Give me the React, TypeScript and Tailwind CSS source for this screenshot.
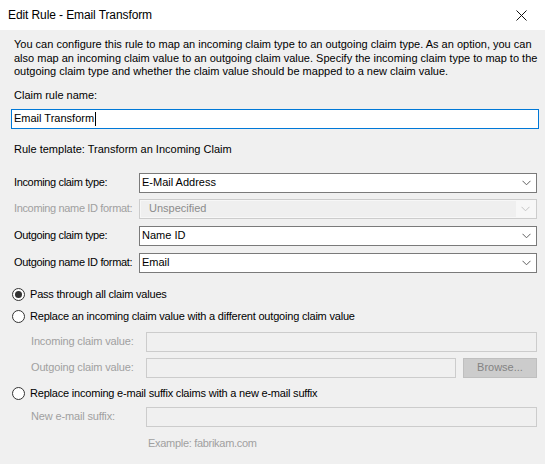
import React from "react";

const font = { fontFamily: '"Liberation Sans", Arial, sans-serif' };

function Chevron({ disabled }: { disabled?: boolean }) {
  return (
    <svg width="9" height="6" viewBox="0 0 9 6" className="shrink-0">
      <path
        d="M0.5 0.8 L4.5 4.8 L8.5 0.8"
        fill="none"
        stroke={disabled ? "#c4c4c4" : "#606060"}
        strokeWidth="1"
      />
    </svg>
  );
}

function Combo({
  label,
  value,
  disabled,
  className = "",
}: {
  label: string;
  value: string;
  disabled?: boolean;
  className?: string;
}) {
  return (
    <div className={`flex items-center pl-[14px] pr-[8px] ${className}`}>
      <span
        className={`w-[125px] shrink-0 whitespace-nowrap tracking-[-0.35px] ${disabled ? "text-[#a0a0a0]" : "text-black"}`}
      >
        {label}
      </span>
      {disabled ? (
        <div className="flex h-[20px] flex-1 items-center border border-[#cccccc] bg-[#f7f7f7] p-[1px]">
          <div className="flex h-full flex-1 items-center bg-[#efefef] pl-[8px] text-[#8c8c8c]">
            {value}
          </div>
          <div className="flex w-[19px] justify-center">
            <Chevron disabled />
          </div>
        </div>
      ) : (
        <div className="flex h-[20px] flex-1 items-center border border-[#7a7a7a] bg-white pl-[2px]">
          <span className="flex-1">{value}</span>
          <div className="flex w-[19px] justify-center">
            <Chevron />
          </div>
        </div>
      )}
    </div>
  );
}

function Radio({
  label,
  checked,
  className = "",
}: {
  label: string;
  checked?: boolean;
  className?: string;
}) {
  return (
    <div className={`flex h-[16px] items-center pl-[12px] ${className}`}>
      <span className="flex h-[13px] w-[13px] items-center justify-center rounded-full border border-[#333333] bg-white">
        {checked && <span className="h-[7px] w-[7px] rounded-full bg-[#333333]" />}
      </span>
      <span className="ml-[5px] tracking-[-0.2px]">{label}</span>
    </div>
  );
}

function DisabledField({
  label,
  className = "",
  browse,
}: {
  label: string;
  className?: string;
  browse?: boolean;
}) {
  return (
    <div className={`flex items-center pl-[31px] pr-[8px] ${className}`}>
      <span className="w-[115px] shrink-0 whitespace-nowrap tracking-[-0.15px] text-[#a0a0a0]">{label}</span>
      <div className="h-[20px] flex-1 border border-[#cccccc] bg-[#f0f0f0]" />
      {browse && (
        <div className="ml-[7px] flex h-[20px] w-[74px] items-center justify-center border border-[#bfbfbf] bg-[#cccccc] text-[#838383]">
          Browse...
        </div>
      )}
    </div>
  );
}

export default function App() {
  return (
    <div
      className="flex h-[464px] w-[545px] flex-col overflow-hidden bg-[#f0f0f0] text-[11px] leading-[13px] text-black"
      style={font}
    >
      <div className="flex h-[30px] shrink-0 items-center justify-between bg-white pl-[8px] pr-[18px]">
        <span className="text-[12px] tracking-[-0.1px]">Edit Rule - Email Transform</span>
        <svg width="11" height="11" viewBox="0 0 11 11">
          <path d="M0.5 0.5 L10.5 10.5 M10.5 0.5 L0.5 10.5" stroke="#111" strokeWidth="1" />
        </svg>
      </div>

      <p className="mt-[8px] pl-[14px] leading-[13.5px]">
        You can configure this rule to map an incoming claim type to an outgoing claim type. As an option, you can
        <br />
        also map an incoming claim value to an outgoing claim value. Specify the incoming claim type to map to the
        <br />
        outgoing claim type and whether the claim value should be mapped to a new claim value.
      </p>

      <div className="mt-[10px] pl-[14px]">Claim rule name:</div>
      <div className="ml-[11px] mr-[6px] mt-[7px] flex h-[20px] items-center border border-[#0078d7] bg-white pl-[2px]">
        <span>Email Transform</span>
        <span className="ml-[1px] h-[14px] w-[1px] bg-black" />
      </div>

      <div className="mt-[14px] pl-[14px]">Rule template: Transform an Incoming Claim</div>

      <Combo className="mt-[17px]" label="Incoming claim type:" value="E-Mail Address" />
      <Combo className="mt-[6px]" label="Incoming name ID format:" value="Unspecified" disabled />
      <Combo className="mt-[7px]" label="Outgoing claim type:" value="Name ID" />
      <Combo className="mt-[7px]" label="Outgoing name ID format:" value="Email" />

      <Radio className="mt-[14px]" label="Pass through all claim values" checked />
      <Radio className="mt-[6px]" label="Replace an incoming claim value with a different outgoing claim value" />

      <DisabledField className="mt-[7px]" label="Incoming claim value:" />
      <DisabledField className="mt-[6px]" label="Outgoing claim value:" browse />

      <Radio className="mt-[8px]" label="Replace incoming e-mail suffix claims with a new e-mail suffix" />
      <DisabledField className="mt-[5px]" label="New e-mail suffix:" />

      <div className="mt-[10px] pl-[148px] tracking-[-0.3px] text-[#a0a0a0]">Example: fabrikam.com</div>
    </div>
  );
}
